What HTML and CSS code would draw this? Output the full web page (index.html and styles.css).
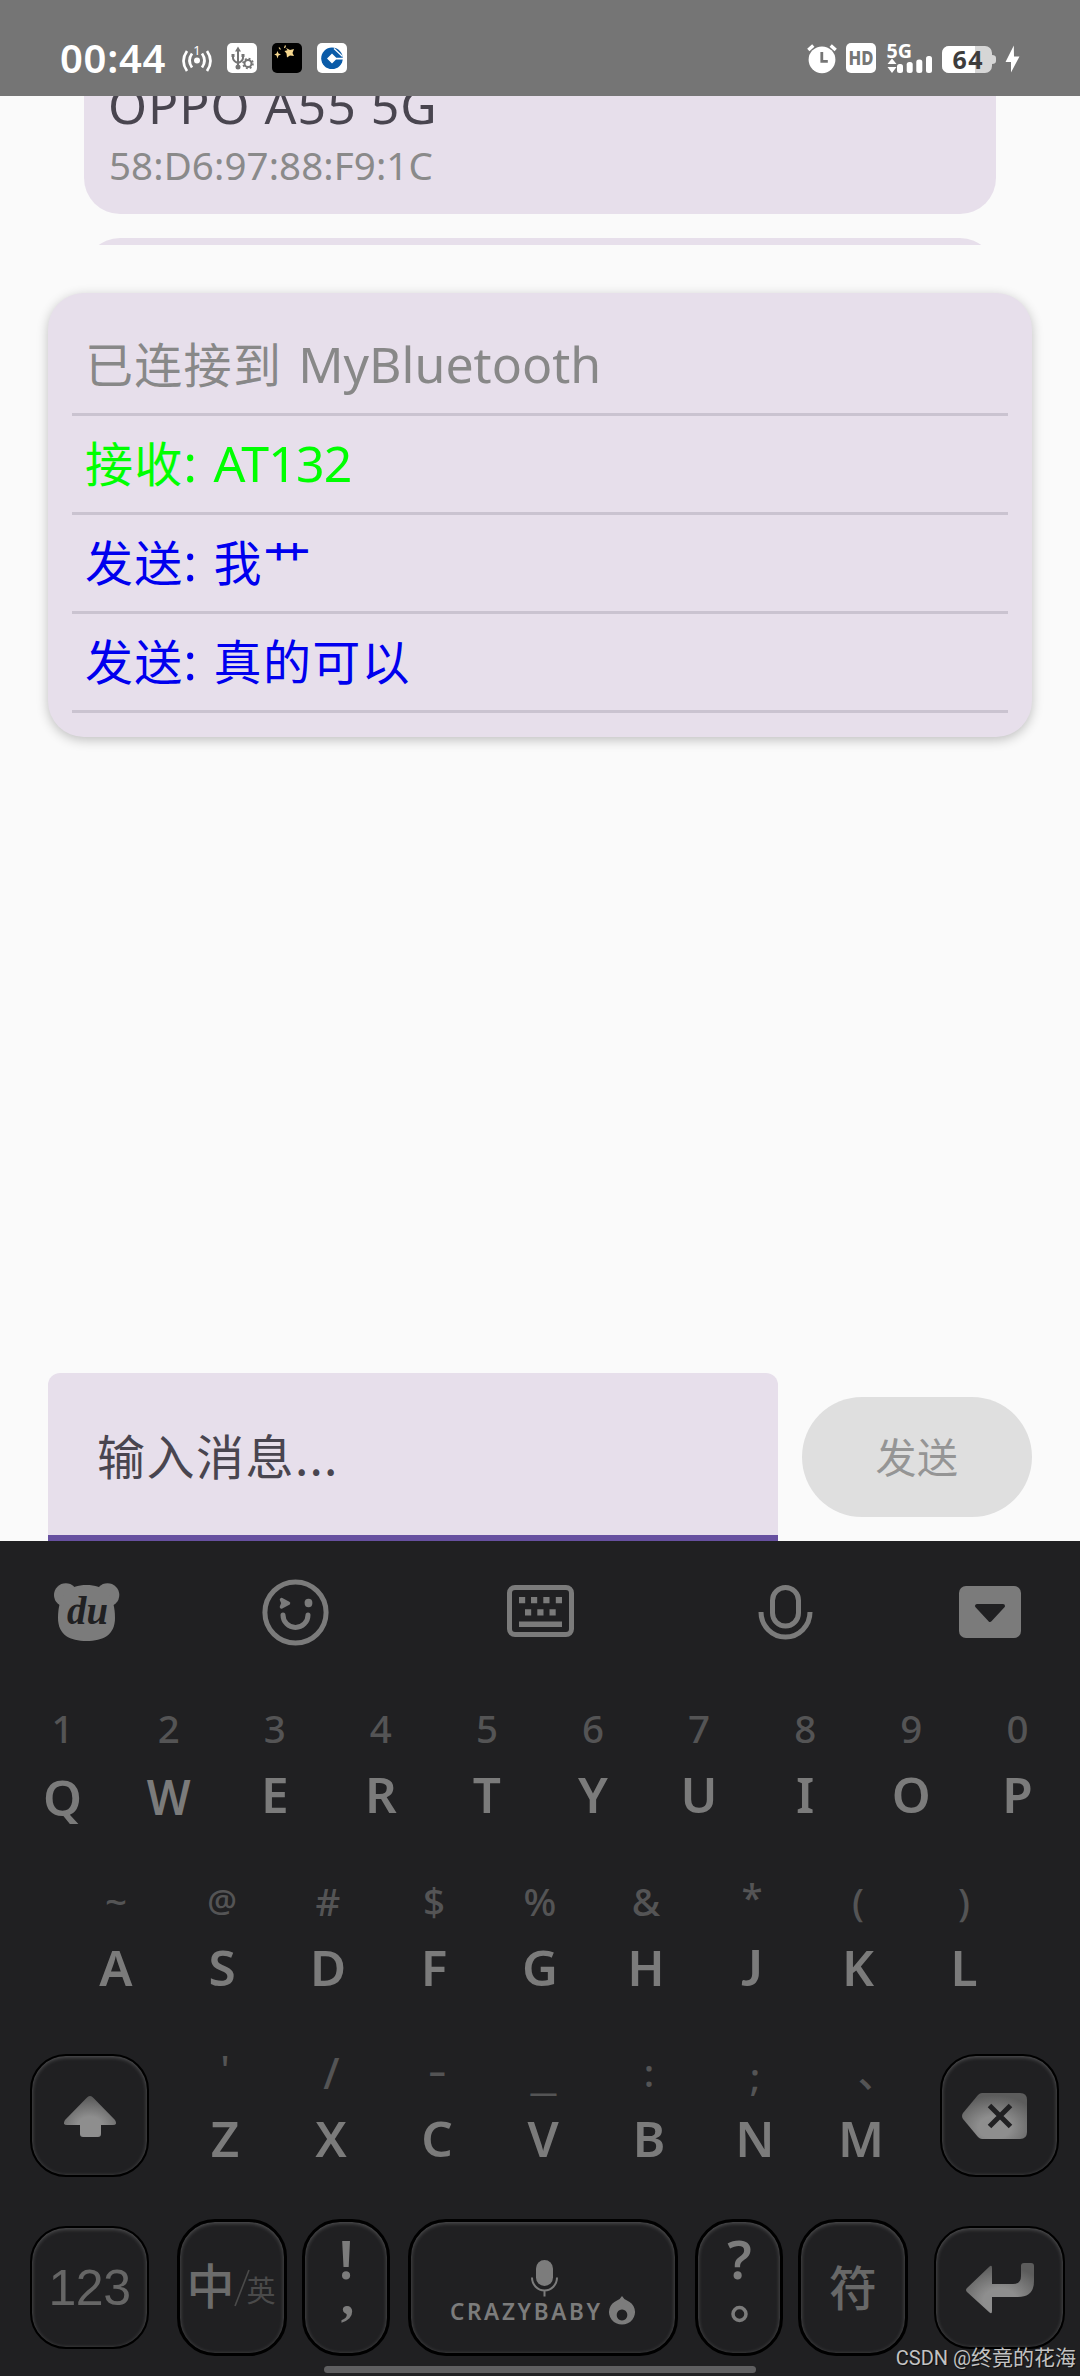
FILE: index.html
```html
<!DOCTYPE html>
<html lang="zh-CN">
<head>
<meta charset="utf-8">
<title>MyBluetooth</title>
<link rel="stylesheet" href="styles.css">
</head>
<body>
<div class="screen">
  <header class="status">
    <span class="clock">00:44</span>
    <svg class="hotspot" width="30" height="30" viewBox="182 43 30 30" fill="none" stroke="#fff" stroke-width="2.7">
      <circle cx="197" cy="60.5" r="3" fill="#fff" stroke="none"/>
      <path d="M192 53.500q-5 7 0 14M202 53.500q5 7 0 14M187 51q-7 10 0 20M207 51q7 10 0 20"/>
      <text x="197" y="54.500" font-size="13" text-anchor="middle" fill="#fff" stroke="none">1</text>
    </svg>
    <svg class="app" width="30" height="30" viewBox="227 43 30 30" fill="none" stroke="#757575" stroke-width="2">
      <rect x="227" y="43" width="30" height="30" rx="5" fill="#fff" stroke="none"/>
      <path d="M238 50V66M233 56v2q0 3 5 5M243 56v2q0 3-5 5"/>
      <path d="M238 46.500l3 5h-6zM231.500 54h3v3h-3zM241.500 54h3v3h-3z" fill="#757575" stroke="none"/>
      <circle cx="238" cy="67" r="2.500" fill="#757575" stroke="none"/>
      <circle cx="248" cy="63.500" r="3.500"/>
      <circle cx="248" cy="63.500" r="4.900" stroke-width="1.800" stroke-dasharray="1.900 1.950"/>
    </svg>
    <svg class="app" width="30" height="30" viewBox="272 43 30 30" fill="#f5d78f">
      <rect x="272" y="43" width="30" height="30" rx="5" fill="#000"/>
      <path d="M286 48l4 2 4-1-1.500 4 1.500 3-4-.500-3 2-.500-4-2-2.500 3-.800zM277.500 51l1 2.500 2.500 1-2.500 1-1 3-1-3-2.300-1 2.300-1z"/>
      <path d="M279 47.500l1.500 2M285.500 45.500l-1 2.500" stroke="#f5d78f" stroke-width="1.200"/>
    </svg>
    <svg class="app" width="30" height="30" viewBox="317 43 30 30">
      <rect x="317" y="43" width="30" height="30" rx="5" fill="#fff"/>
      <circle cx="332" cy="58.300" r="10.800" fill="#0a5ba8"/>
      <path d="M332 53.500l5 5-5 5-5-5zM335 57.800h9v1.600h-9z" fill="#fff"/>
      <path d="M334 48.500l8.500 8" stroke="#fff" stroke-width="1.300"/>
    </svg>
    <svg class="alarm" width="30" height="30" viewBox="807 43 30 30">
      <circle cx="822" cy="59.800" r="13.400" fill="#fff"/>
      <path d="M808.300 50l5-4.500M835.700 50l-5-4.500" stroke="#fff" stroke-width="3.400"/>
      <path d="M821.800 52v9.300h6" fill="none" stroke="#757575" stroke-width="2.800"/>
    </svg>
    <svg class="hd" width="30" height="30" viewBox="846 43 30 30">
      <rect x="846" y="43" width="30" height="30" rx="5" fill="#fff"/>
      <text x="848.500" y="64.800" font-size="19" font-weight="800" fill="#757575" textLength="25" lengthAdjust="spacingAndGlyphs">HD</text>
    </svg>
    <svg class="signal" width="45" height="30" viewBox="887 43 45 30" fill="#fff">
      <text x="886.500" y="57.800" font-size="20" font-weight="700" textLength="25.500" lengthAdjust="spacingAndGlyphs">5G</text>
      <path d="M887.500 64h9l-4.500-5.500zM887.500 67h9l-4.500 6z"/>
      <rect x="897" y="64" width="6" height="9" rx="2.500"/>
      <rect x="906.700" y="62" width="6" height="11" rx="2.500"/>
      <rect x="916.300" y="59.500" width="6" height="13.500" rx="2.500"/>
      <rect x="926" y="56" width="6" height="17" rx="2.500"/>
    </svg>
    <svg class="battery" width="54" height="30" viewBox="942 43 54 30">
      <path d="M949 46h36a7 7 0 0 1 7 7v2q4 0 4 3v3q0 3-4 3v2a7 7 0 0 1-7 7h-36a7 7 0 0 1-7-7V53a7 7 0 0 1 7-7z" fill="#d6d6d6"/>
      <path d="M949 46h26v27h-26a7 7 0 0 1-7-7V53a7 7 0 0 1 7-7z" fill="#fff"/>
      <text x="952.500" y="68.800" font-size="25" font-weight="700" fill="#3d3d3d" textLength="30">64</text>
    </svg>
    <svg class="bolt" width="15" height="30" viewBox="1005 43 15 30"><path d="M1013.800 45.500L1005.500 62h5.500v10.500l8.500-16h-5.500z" fill="#fff"/></svg>
  </header>

  <main class="app-body">
    <section class="devices">
      <article class="device">
        <h2 class="device-name">OPPO A55 5G</h2>
        <p class="device-mac">58:D6:97:88:F9:1C</p>
      </article>
      <article class="device"></article>
    </section>

    <section class="log">
      <p class="line info">已连接到 <span class="latin name">MyBluetooth</span></p>
      <p class="line recv">接收<span class="latin colon">:</span><span class="latin at">AT132</span></p>
      <p class="line sent">发送<span class="latin colon">:</span>我艹</p>
      <p class="line sent">发送<span class="latin colon">:</span>真的可以</p>
    </section>

    <form class="composer">
      <div class="field">输入消息<span class="dots">...</span></div>
      <div class="send">发送</div>
    </form>
  </main>

  <section class="keyboard">
    <nav class="tools">
      <svg width="70" height="70" viewBox="52 1577 70 70" fill="#7b7b7b">
        <circle cx="65.800" cy="1595" r="11.800"/><circle cx="107.500" cy="1595" r="11.800"/>
        <path d="M86.500 1585c17 0 28.500 9 28.500 33 0 17-12 23-28.500 23s-28.500-6-28.500-23c0-24 11.500-33 28.500-33z"/>
        <text class="du" x="67" y="1623.500" font-size="40" textLength="41" lengthAdjust="spacingAndGlyphs">du</text>
      </svg>
      <svg width="70" height="70" viewBox="260 1577 70 70" fill="none" stroke="#7b7b7b" stroke-width="5">
        <circle cx="295.500" cy="1612.500" r="30.600"/>
        <path d="M283 1615a12.500 12.500 0 0 0 25 0" stroke-linecap="round"/>
        <path d="M281.500 1599.500l7 3.700-7 3.700 1.500-3.700z" fill="#7b7b7b" stroke-width="3.500" stroke-linejoin="round"/>
        <ellipse cx="308.500" cy="1603" rx="3.900" ry="4.200" fill="#7b7b7b" stroke="none"/>
      </svg>
      <svg width="70" height="70" viewBox="505 1577 70 70" fill="#7b7b7b">
        <rect x="509.500" y="1587.500" width="62" height="47" rx="5.500" fill="none" stroke="#7b7b7b" stroke-width="5"/>
        <path d="M519 1597h6.200v6.200h-6.200zM531 1597h6.200v6.200h-6.200zM543.300 1597h6.200v6.200h-6.200zM555.800 1597h6.200v6.200h-6.200zM525 1609.300h6.200v6.200h-6.200zM537.300 1609.300h6.200v6.200h-6.200zM549.500 1609.300h6.200v6.200h-6.200zM519 1621.500h43v5.500h-43z"/>
      </svg>
      <svg width="70" height="70" viewBox="751 1577 70 70" fill="none" stroke="#7b7b7b" stroke-width="5">
        <rect x="772.500" y="1587.500" width="26" height="38.500" rx="13"/>
        <path d="M761 1612a24.500 25 0 0 0 49 0"/>
      </svg>
      <svg width="70" height="70" viewBox="955 1577 70 70">
        <rect x="959" y="1586" width="62" height="52" rx="7" fill="#7b7b7b"/>
        <path d="M977 1606h26l-13 14z" fill="#202022" stroke="#202022" stroke-width="4" stroke-linejoin="round"/>
      </svg>
    </nav>

    <div class="row row-1">
      <div class="key"><span class="sub">1</span><span class="main low-4">Q</span></div>
      <div class="key"><span class="sub">2</span><span class="main low-2">W</span></div>
      <div class="key"><span class="sub">3</span><span class="main">E</span></div>
      <div class="key"><span class="sub">4</span><span class="main">R</span></div>
      <div class="key"><span class="sub">5</span><span class="main">T</span></div>
      <div class="key"><span class="sub">6</span><span class="main">Y</span></div>
      <div class="key"><span class="sub">7</span><span class="main">U</span></div>
      <div class="key"><span class="sub">8</span><span class="main">I</span></div>
      <div class="key"><span class="sub">9</span><span class="main">O</span></div>
      <div class="key"><span class="sub">0</span><span class="main">P</span></div>
    </div>

    <div class="row row-2">
      <div class="key"><span class="sub">~</span><span class="main">A</span></div>
      <div class="key"><span class="sub at-sign">@</span><span class="main">S</span></div>
      <div class="key"><span class="sub">#</span><span class="main">D</span></div>
      <div class="key"><span class="sub">$</span><span class="main">F</span></div>
      <div class="key"><span class="sub">%</span><span class="main">G</span></div>
      <div class="key"><span class="sub">&amp;</span><span class="main">H</span></div>
      <div class="key"><span class="sub star">*</span><span class="main hook">J</span></div>
      <div class="key"><span class="sub">(</span><span class="main">K</span></div>
      <div class="key"><span class="sub">)</span><span class="main">L</span></div>
    </div>

    <div class="row row-3">
      <div class="cap cap-side">
        <svg width="60" height="50" viewBox="59 2090 60 50">
          <defs><radialGradient id="glow" cx=".5" cy=".75" r=".7"><stop offset=".35" stop-color="#8e8e8e"/><stop offset="1" stop-color="#5c5c5c"/></radialGradient></defs>
          <path d="M85.500 2097q3.500-4 7 0L114 2119q3 5-2 5h-12v9q0 3-3 3H82q-3 0-3-3v-9H66q-5 0-2-5z" fill="url(#glow)"/>
        </svg>
      </div>
      <div class="letters">
        <div class="key"><span class="sub up-4">'</span><span class="main">Z</span></div>
        <div class="key"><span class="sub slash">/</span><span class="main">X</span></div>
        <div class="key"><span class="sub hyphen">-</span><span class="main">C</span></div>
        <div class="key"><span class="sub underscore">_</span><span class="main">V</span></div>
        <div class="key"><span class="sub">:</span><span class="main">B</span></div>
        <div class="key"><span class="sub low-5">;</span><span class="main">N</span></div>
        <div class="key"><span class="sub comma-cn">、</span><span class="main">M</span></div>
      </div>
      <div class="cap cap-side">
        <svg class="erase" width="70" height="50" viewBox="960 2090 70 50">
          <path d="M982 2092h38q7 0 7 7v32q0 7-7 7h-38q-2 0-4-2l-15-18q-2-3 0-6l15-18q2-2 4-2z" fill="url(#glow)"/>
          <path d="M989.500 2104.500l21 21M1010.500 2104.500l-21 21" stroke="#202022" stroke-width="5"/>
        </svg>
      </div>
    </div>

    <div class="row row-4">
      <div class="cap cap-123">123</div>
      <div class="cap cap-lang">
        <svg width="104" height="131" viewBox="180 2222 104 131">
          <text class="cjk-key" x="186.500" y="2304" font-size="48" font-weight="500" fill="#6c6c6c">中</text>
          <path d="M235 2306L249 2270" stroke="#4a4a4a" stroke-width="1.600"/>
          <text class="cjk-key" x="246.500" y="2302" font-size="29" fill="#4a4a4a">英</text>
        </svg>
      </div>
      <div class="cap cap-punct">
        <svg width="82" height="131" viewBox="305 2222 82 131" fill="#7c7c7c" text-anchor="middle">
          <text x="346" y="2278.500" font-size="53" font-weight="600">!</text>
          <text x="347.500" y="2313.500" font-size="54" font-weight="700" font-family="Liberation Serif">,</text>
        </svg>
      </div>
      <div class="cap cap-space">
        <svg width="264" height="131" viewBox="411 2222 264 131" fill="#7c7c7c">
          <rect x="536" y="2260" width="17" height="26" rx="8.500"/>
          <path d="M532 2277.500a12.500 13 0 0 0 25 0M544.500 2290.500v6" fill="none" stroke="#7c7c7c" stroke-width="2"/>
          <text x="450" y="2320" font-size="22.500" font-weight="600" textLength="150">CRAZYBABY</text>
          <path fill-rule="evenodd" d="M622 2296q2 3.500 5 4.500a13 12.500 0 1 1-10 0q3-1 5-4.500zm0 13.500a5.300 5.500 0 1 0 .01 0z"/>
        </svg>
      </div>
      <div class="cap cap-punct">
        <svg width="82" height="131" viewBox="698 2222 82 131" fill="#7c7c7c" text-anchor="middle">
          <text x="739.500" y="2278.500" font-size="53" font-weight="600">?</text>
          <circle cx="739.500" cy="2314" r="6.500" fill="none" stroke="#7c7c7c" stroke-width="3.500"/>
        </svg>
      </div>
      <div class="cap cap-sym">符</div>
      <div class="cap cap-enter">
        <svg width="74" height="56" viewBox="962 2259 74 56">
          <path d="M991 2267v16h21q8 0 8-8v-10q0-3 3-3h7q3 0 3 3v15q0 16-16 16h-26v14q0 4-3 1l-22-20q-2-2 0-4l22-21q3-3 3 1z" fill="url(#glow)"/>
        </svg>
      </div>
    </div>
    <div class="gesture"></div>
    <div class="watermark">CSDN @<span class="author">终竟的花海</span></div>
  </section>
</div>
</body>
</html>
```

FILE: styles.css
```css
* { box-sizing: border-box; }

body {
  margin: 0;
  background: #fafafa;
  font-family: "Noto Sans", "Noto Sans CJK SC", sans-serif;
}

h2, p { margin: 0; font-weight: 400; }

svg { display: block; flex: none; overflow: visible; }

.screen {
  position: relative;
  display: flex;
  flex-direction: column;
  width: 1080px;
  height: 2376px;
  overflow: hidden;
}

/* status bar */
.status {
  display: flex;
  align-items: flex-start;
  height: 96px;
  padding: 43px 60px 0;
  background: #757575;
}

.clock {
  width: 122px;
  line-height: 29px;
  font-size: 40px;
  font-weight: 600;
  letter-spacing: 0.7px;
  color: #fff;
}

.app { margin-left: 15px; }
.alarm { margin-left: 460px; }
.hd { margin-left: 9px; }
.signal { margin-left: 11px; }
.battery { margin-left: 10px; }
.bolt { margin-left: 9px; }

/* application */
.app-body {
  display: flex;
  flex-direction: column;
  height: 1445px;
}

.devices {
  display: flex;
  flex-direction: column;
  justify-content: flex-start;
  gap: 24px;
  height: 149px;
  padding: 0 84px;
  overflow: hidden;
}

.device {
  flex: none;
  height: 118px;
  padding-left: 24px;
  border-radius: 36px;
  background: #e7dfeb;
}

.device:first-child { border-radius: 0 0 36px 36px; }

.device-name {
  height: 36px;
  margin-bottom: 8px;
  line-height: 18px;
  font-size: 50px;
  letter-spacing: 1px;
  color: #49454f;
}

.device-mac {
  padding-left: 1px;
  line-height: 50px;
  font-size: 38.5px;
  letter-spacing: 0.1px;
  color: #8a8a8a;
}

.log {
  height: 444px;
  margin: 48px 48px 0;
  padding: 24px;
  border-radius: 36px;
  background: #e7dfeb;
  box-shadow: 0 3px 12px rgba(0, 0, 0, 0.24);
}

.line {
  height: 99px;
  padding-left: 13px;
  border-bottom: 3px solid #cac3d0;
  line-height: 90px;
  font-family: "Noto Sans CJK SC", sans-serif;
  font-size: 48px;
  letter-spacing: 1.3px;
  white-space: nowrap;
}

.latin {
  font-family: "Noto Sans", sans-serif;
  font-size: 50px;
  letter-spacing: -0.2px;
}

.name { margin-left: 4px; letter-spacing: 0; }
.colon { display: inline-block; width: 30px; }
.at { letter-spacing: -0.8px; }

.info { color: #888; }
.recv { color: #0f0; }
.sent { color: #00e; }

.composer {
  display: flex;
  align-items: center;
  gap: 24px;
  height: 168px;
  margin: auto 48px 0;
  font-family: "Noto Sans CJK SC", sans-serif;
}

.field {
  width: 730px;
  height: 168px;
  padding-left: 49px;
  border-bottom: 6px solid #6750a0;
  border-radius: 12px 12px 0 0;
  background: #e7dfeb;
  line-height: 162px;
  font-size: 48px;
  letter-spacing: 1.5px;
  color: #49454f;
}

.dots { letter-spacing: 1.2px; }

.send {
  width: 230px;
  height: 120px;
  border-radius: 60px;
  background: #dfdfdf;
  line-height: 117px;
  text-align: center;
  font-size: 41px;
  letter-spacing: 0.5px;
  color: #959595;
}

/* keyboard */
.keyboard {
  height: 835px;
  background: #202022;
}

.tools {
  display: grid;
  grid-template-columns: 208px 245px 246px 204px 70px;
  align-items: center;
  height: 142px;
  margin-bottom: 25px;
  padding-left: 52px;
}

.du {
  font-family: "Liberation Serif", serif;
  font-style: italic;
  font-weight: 700;
  fill: #202022;
}

.row { display: flex; }
.row-1 { padding: 0 9.5px; }
.row-2 { margin-top: 57px; padding: 0 63px; }
.row-3 { margin-top: 55px; height: 125px; padding: 0 21px 0 30px; }
.row-4 { align-items: center; margin-top: 42px; height: 137px; padding-left: 30px; }

.letters { display: flex; width: 742px; margin: 0 26px 0 23px; }

.key {
  flex: 1;
  display: flex;
  flex-direction: column;
  align-items: center;
  gap: 16px;
}

.sub {
  height: 40px;
  line-height: 40px;
  font-size: 38.5px;
  font-weight: 500;
  color: #545455;
}

.main {
  height: 60px;
  line-height: 61px;
  font-size: 49.5px;
  font-weight: 600;
  color: #7b7b7b;
}

.hook { font-family: Lato, sans-serif; font-weight: 700; }

.low-2 { transform: translateY(2px) scaleX(0.93); }
.low-4 { transform: translateY(3px); }
.low-5 { transform: translateY(4px); }
.up-4 { transform: translateY(-4px); }
.at-sign { font-size: 33px; }
.star { transform: translateY(-4px); }
.slash { transform: scale(1.1, 1.15); }
.hyphen { transform: translateY(-3px) scaleX(1.5); }
.underscore { transform: translateY(3px) scaleX(1.55); }
.comma-cn { transform: translate(16px, -2px); font-family: "Noto Sans CJK SC", sans-serif; }

.cap {
  display: flex;
  flex: none;
  align-items: center;
  justify-content: center;
  height: 137px;
  border: 3px solid #000;
  border-radius: 38px;
  box-shadow: inset 0 1px 4px rgba(255, 255, 255, 0.25);
}

.cap-side, .cap-123, .cap-enter { height: 123px; border-width: 2px; border-radius: 36px; }
.cap-side { width: 119px; margin-top: 2px; }
.erase { margin-right: 9px; }

.cap-123 {
  width: 119px;
  font-family: "Liberation Sans", sans-serif;
  font-size: 50px;
  letter-spacing: -0.5px;
  color: #666;
}

.cap-lang { width: 110px; margin-left: 28px; }
.cap-punct { width: 88px; margin-left: 15px; }
.cap-space { width: 270px; margin-left: 18px; }
.cap-space + .cap-punct { margin-left: 17px; }

.cap-sym {
  width: 110px;
  margin-left: 15px;
  padding-bottom: 5px;
  font-family: "Noto Sans CJK SC", sans-serif;
  font-size: 48px;
  font-weight: 500;
  color: #686868;
}

.cap-enter { width: 131px; margin-left: 26px; }
.cjk-key { font-family: "Noto Sans CJK SC", sans-serif; }

.gesture {
  width: 432px;
  height: 7px;
  margin: 10px auto 0;
  border-radius: 4px;
  background: #5f5f61;
}

.watermark {
  position: absolute;
  right: 4px;
  bottom: 4px;
  line-height: 28px;
  font-family: Roboto, sans-serif;
  font-size: 20px;
  color: #c2c2c2;
  text-shadow: 1px 1px 1px rgba(0, 0, 0, 0.6);
}

.author { font-family: "Noto Sans CJK SC", sans-serif; font-size: 21px; }
```
